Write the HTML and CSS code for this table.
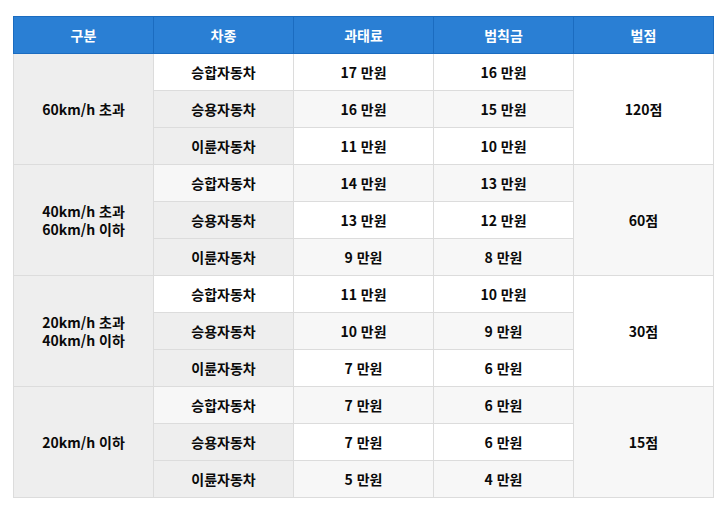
FILE: index.html
```html
<!DOCTYPE html>
<html lang="ko">
<head>
<meta charset="utf-8">
<link rel="stylesheet" href="styles.css">
</head>
<body>
<table class="fine">
  <colgroup><col><col><col><col><col></colgroup>
  <thead>
    <tr><th>구분</th><th>차종</th><th>과태료</th><th>범칙금</th><th>벌점</th></tr>
  </thead>
  <tbody>
    <tr><td rowspan="3">60km/h 초과</td><td>승합자동차</td><td>17 만원</td><td>16 만원</td><td rowspan="3">120점</td></tr>
    <tr><td>승용자동차</td><td>16 만원</td><td>15 만원</td></tr>
    <tr><td>이륜자동차</td><td>11 만원</td><td>10 만원</td></tr>
    <tr><td rowspan="3">40km/h 초과<br>60km/h 이하</td><td>승합자동차</td><td>14 만원</td><td>13 만원</td><td rowspan="3">60점</td></tr>
    <tr><td>승용자동차</td><td>13 만원</td><td>12 만원</td></tr>
    <tr><td>이륜자동차</td><td>9 만원</td><td>8 만원</td></tr>
    <tr><td rowspan="3">20km/h 초과<br>40km/h 이하</td><td>승합자동차</td><td>11 만원</td><td>10 만원</td><td rowspan="3">30점</td></tr>
    <tr><td>승용자동차</td><td>10 만원</td><td>9 만원</td></tr>
    <tr><td>이륜자동차</td><td>7 만원</td><td>6 만원</td></tr>
    <tr><td rowspan="3">20km/h 이하</td><td>승합자동차</td><td>7 만원</td><td>6 만원</td><td rowspan="3">15점</td></tr>
    <tr><td>승용자동차</td><td>7 만원</td><td>6 만원</td></tr>
    <tr><td>이륜자동차</td><td>5 만원</td><td>4 만원</td></tr>
  </tbody>
</table>
</body>
</html>
```

FILE: styles.css
```css
html, body {
  margin: 0;
  padding: 0;
  background: #ffffff;
}
body {
  padding: 16px 0 0 13px;
  font-family: "Noto Sans CJK KR", "Noto Sans", sans-serif;
  color: #111111;
}
.fine {
  border-collapse: collapse;
  table-layout: fixed;
  width: 700px;
  font-size: 14px;
}
.fine col {
  width: 140px;
}
.fine th,
.fine td {
  height: 36px;
  padding: 0;
  text-align: center;
  vertical-align: middle;
  line-height: 18px;
}
.fine th {
  background: #2a7fd4;
  color: #ffffff;
  font-weight: 700;
  border: 1px solid #1b6cc0;
}
.fine td {
  border: 1px solid #dcdcdc;
  font-weight: 600;
  background: #ffffff;
  color: #0a0a0a;
}
.fine tbody tr:nth-child(even) td {
  background: #f7f7f7;
}
.fine tbody tr td:first-child {
  background: #eeeeee;
}
```
